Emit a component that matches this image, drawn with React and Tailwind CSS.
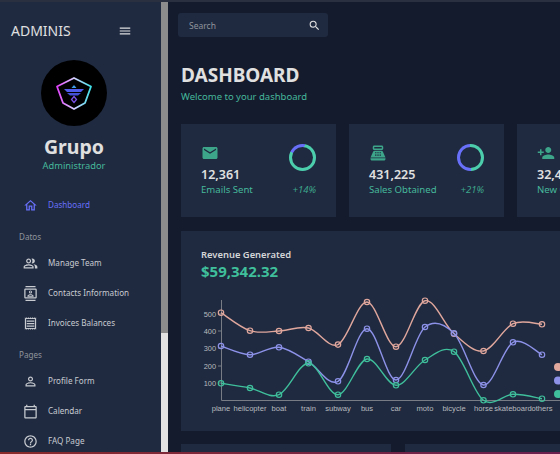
import {
  MdEmail,
  MdMenu,
  MdOutlineCalendarToday,
  MdOutlineContacts,
  MdOutlineHelpOutline,
  MdOutlineHome,
  MdOutlinePeopleAlt,
  MdOutlinePersonOutline,
  MdOutlineReceipt,
  MdPersonAdd,
  MdPointOfSale,
  MdSearch
} from 'react-icons/md';

const labels = ['plane', 'helicopter', 'boat', 'train', 'subway', 'bus', 'car', 'moto', 'bicycle', 'horse', 'skateboard', 'others'];
const xs = [221, 250, 279, 308.5, 338, 367, 396, 425, 454, 483.5, 513, 542];
const series = [
  { color: '#e0a79d', ys: [312.7, 330.7, 331, 328, 344.6, 302, 346.7, 300.7, 333.7, 351, 323.7, 324.3] },
  { color: '#8d92e8', ys: [346, 354.7, 347.3, 361.7, 381.3, 328.7, 380, 327, 333.3, 385, 342.3, 354.7] },
  { color: '#3fbf9b', ys: [383.3, 388, 394.7, 363.3, 394.7, 359, 385.3, 360, 351.7, 400.3, 394.3, 398.7] }
];

function curve(ys) {
  const pts = xs.map((x, i) => [x, ys[i]]);
  let d = `M${pts[0][0]} ${pts[0][1]}`;
  for (let i = 0; i < pts.length - 1; i++) {
    const p0 = pts[i - 1] || pts[i];
    const p1 = pts[i];
    const p2 = pts[i + 1];
    const p3 = pts[i + 2] || p2;
    const c1 = [p1[0] + (p2[0] - p0[0]) / 6, p1[1] + (p2[1] - p0[1]) / 6];
    const c2 = [p2[0] - (p3[0] - p1[0]) / 6, p2[1] - (p3[1] - p1[1]) / 6];
    d += ` C${c1[0]} ${c1[1]} ${c2[0]} ${c2[1]} ${p2[0]} ${p2[1]}`;
  }
  return d;
}

function Logo() {
  return (
    <svg viewBox="0 0 66 66" className="w-[66px] h-[66px]">
      <defs>
        <linearGradient id="ring" x1="0" x2="1" y1="0" y2="0">
          <stop offset="0" stopColor="#e040fb" />
          <stop offset="0.5" stopColor="#d8cfff" />
          <stop offset="1" stopColor="#3fe0e8" />
        </linearGradient>
      </defs>
      <circle cx="33" cy="33" r="33" fill="#000" />
      <path d="M33 18 L50 26.5 L44 43 L33 49 L22 43 L16 26.5 Z" fill="none" stroke="url(#ring)" strokeWidth="1.8" strokeLinejoin="round" />
      <path d="M23 29 H43 L40 32 H26 Z" fill="#4f5bea" />
      <path d="M26 33 H40 L37 35.5 H29 Z" fill="#4350d8" />
      <path d="M33 25 L35.5 28 H30.5 Z" fill="#3f9be8" />
      <path d="M33 36.5 L35.5 39.5 L33 42.5 L30.5 39.5 Z" fill="none" stroke="#7a4fe8" strokeWidth="1.3" />
    </svg>
  );
}

function NavItem({ icon: Icon, label, active }) {
  return (
    <div className={`flex items-center h-[30px] pl-[23px] ${active ? 'text-[#6870fa]' : 'text-[#c8cbd0]'}`}>
      <Icon className="w-[15px] h-[15px] shrink-0" />
      <span className="ml-[10px] text-[8.1px] leading-[12px] whitespace-nowrap">{label}</span>
    </div>
  );
}

function SectionLabel({ children, className }) {
  return <p className={`pl-[19px] text-[8.1px] leading-[12px] text-[#8f949c] ${className}`}>{children}</p>;
}

function StatCard({ icon: Icon, value, label, pct, ring }) {
  return (
    <div className="bg-[#1f2a40] h-[93px] flex justify-between pl-[20px] pr-[20px] pt-[20px] shrink-0 w-[155px]">
      <div>
        <Icon className="w-[18px] h-[18px] text-[#3da58a]" />
        <p className="mt-[4px] text-[12.5px] leading-[17px] font-semibold text-[#e0e0e0]">{value}</p>
        <p className="text-[9.6px] leading-[14px] text-[#46b89b] whitespace-nowrap">{label}</p>
      </div>
      <div className="flex flex-col items-end">
        <div className={`w-[27px] h-[27px] rounded-full flex items-center justify-center ${ring}`}>
          <div className="w-[21px] h-[21px] rounded-full bg-[#1f2a40]" />
        </div>
        <p className="mt-[12px] text-[9.5px] leading-[14px] italic text-[#3da58a]">{pct}</p>
      </div>
    </div>
  );
}

function RevenueChart() {
  return (
    <svg viewBox="181 231 379 200" className="absolute left-0 top-0 w-[379px] h-[200px]">
      <path d="M221.5 300 V400.5 H560" fill="none" stroke="#777c85" strokeWidth="1" />
      {[[500, 314], [400, 331], [300, 348], [200, 366], [100, 383]].map(([t, y]) => (
        <g key={t}>
          <line x1="218" x2="221" y1={y} y2={y} stroke="#777c85" />
          <text x="216" y={y + 2.5} textAnchor="end" fontSize="7.4" fill="#b8bbbf" fontFamily="Liberation Sans, sans-serif">{t}</text>
        </g>
      ))}
      {labels.map((l, i) => (
        <text key={l} x={xs[i]} y="411" textAnchor="middle" fontSize="7.6" fill="#b8bbbf" fontFamily="Liberation Sans, sans-serif">{l}</text>
      ))}
      {series.map((s) => (
        <g key={s.color}>
          <path d={curve(s.ys)} fill="none" stroke={s.color} strokeWidth="1.4" />
          {s.ys.map((y, i) => (
            <circle key={i} cx={xs[i]} cy={y} r="2.7" fill="none" stroke={s.color} strokeWidth="1.2" />
          ))}
        </g>
      ))}
      {series.map((s, i) => (
        <circle key={s.color} cx="558" cy={367 + i * 13.5} r="4" fill={s.color} />
      ))}
    </svg>
  );
}

export default function App() {
  return (
    <div className='w-[560px] h-[454px] overflow-hidden bg-[#141b2d] flex flex-col font-["Noto_Sans",sans-serif]'>
      <div className="h-[2px] bg-[#2b3040] shrink-0" />
      <div className="flex flex-1 min-h-0">
        <aside className="w-[161px] bg-[#1f2a40] shrink-0 overflow-hidden">
          <div className="flex items-center justify-between pl-[11px] pr-[29px] pt-[18px] h-[40px]">
            <span className="text-[14px] leading-[20px] text-[#e0e0e0]">ADMINIS</span>
            <MdMenu className="w-[14px] h-[14px] text-[#e0e0e0]" />
          </div>
          <div className="flex flex-col items-center mt-[18px] pr-[13px]">
            <Logo />
            <p className="mt-[6px] text-[19.5px] leading-[30px] font-bold text-[#e0e0e0]">Grupo</p>
            <p className="-mt-[3px] text-[9.3px] leading-[14px] text-[#46b89b]">Administrador</p>
          </div>
          <div className="mt-[17px]">
            <NavItem icon={MdOutlineHome} label="Dashboard" active />
          </div>
          <SectionLabel className="mt-[11px] mb-[5px]">Datos</SectionLabel>
          <NavItem icon={MdOutlinePeopleAlt} label="Manage Team" />
          <NavItem icon={MdOutlineContacts} label="Contacts Information" />
          <NavItem icon={MdOutlineReceipt} label="Invoices Balances" />
          <SectionLabel className="mt-[11px] mb-[5px]">Pages</SectionLabel>
          <NavItem icon={MdOutlinePersonOutline} label="Profile Form" />
          <NavItem icon={MdOutlineCalendarToday} label="Calendar" />
          <NavItem icon={MdOutlineHelpOutline} label="FAQ Page" />
        </aside>
        <div className="w-[7px] shrink-0 flex flex-col">
          <div className="h-[331px] bg-[#8c8c8c]" />
          <div className="flex-1 bg-[#e2e2e2]" />
        </div>
        <main className="flex-1 min-w-0 overflow-hidden">
          <div className="pl-[10px] pt-[11px]">
            <div className="w-[150px] h-[24px] bg-[#1f2a40] rounded-[3px] flex items-center justify-between pl-[11px] pr-[7px]">
              <span className="text-[8.5px] leading-[12px] mt-[1px] text-[#8f949c]">Search</span>
              <MdSearch className="w-[13px] h-[13px] text-[#e0e0e0]" />
            </div>
          </div>
          <div className="pl-[13px] pt-[25px]">
            <h1 className="text-[19px] leading-[26px] font-bold text-[#e0e0e0]">DASHBOARD</h1>
            <p className="mt-[2px] text-[9.5px] leading-[14px] text-[#46b89b]">Welcome to your dashboard</p>
            <div className="mt-[20px] flex gap-[13px]">
              <StatCard icon={MdEmail} value="12,361" label="Emails Sent" pct="+14%" ring="bg-[conic-gradient(#6870fa_0deg_10deg,#4cceac_10deg_295deg,#6870fa_295deg_360deg)]" />
              <StatCard icon={MdPointOfSale} value="431,225" label="Sales Obtained" pct="+21%" ring="bg-[conic-gradient(#4cceac_0deg_180deg,#6870fa_180deg_360deg)]" />
              <StatCard icon={MdPersonAdd} value="32,441" label="New Clients" pct="+5%" ring="bg-[conic-gradient(#4cceac_0deg_180deg,#6870fa_180deg_360deg)]" />
            </div>
            <div className="relative mt-[14px] h-[200px] w-[520px] bg-[#1f2a40] pl-[20px] pt-[17px]">
              <RevenueChart />
              <p className="relative text-[9.4px] leading-[14px] font-semibold text-[#d5d6d8]">Revenue Generated</p>
              <p className="relative -mt-[1px] text-[15px] leading-[20px] font-bold text-[#3fbf9b]">$59,342.32</p>
            </div>
            <div className="mt-[13px] flex gap-[14px]">
              <div className="w-[210px] h-[40px] bg-[#1f2a40] shrink-0" />
              <div className="w-[210px] h-[40px] bg-[#1f2a40] shrink-0" />
            </div>
          </div>
        </main>
      </div>
      <div className="h-[2px] shrink-0 bg-gradient-to-r from-[#8a2a2a] to-[#6b1f4f]" />
    </div>
  );
}
